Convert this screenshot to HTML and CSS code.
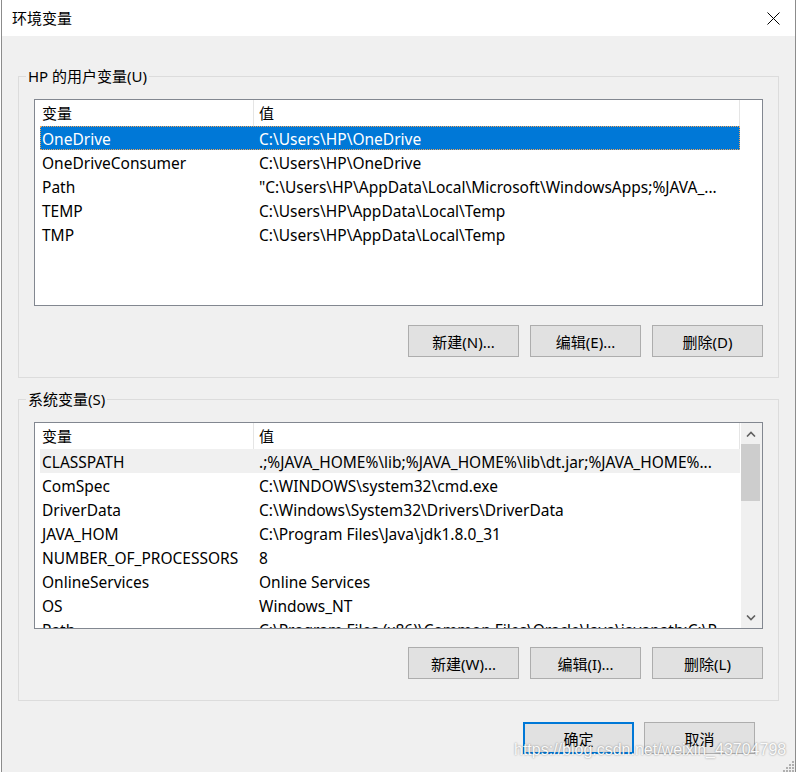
FILE: index.html
```html
<!DOCTYPE html>
<html lang="zh-CN">
<head>
<meta charset="utf-8">
<title>环境变量</title>
<link rel="stylesheet" href="styles.css">
</head>
<body>
<div class="window">
  <div class="titlebar">
    <span class="title">环境变量</span>
    <svg class="close" width="13" height="13" viewBox="0 0 13 13"><path d="M0.5 0.5 L12.5 12.5 M12.5 0.5 L0.5 12.5" stroke="#000" stroke-width="1" fill="none"/></svg>
  </div>
  <div class="content">
    <fieldset class="group group-user">
      <legend>HP 的用户变量(U)</legend>
      <div class="list">
        <div class="list-main">
          <div class="list-header"><div class="hcol hcol-name">变量</div><div class="hcol hcol-value">值</div></div>
          <div class="row selected"><div class="cell name">OneDrive</div><div class="cell value">C:\Users\HP\OneDrive</div></div>
          <div class="row"><div class="cell name">OneDriveConsumer</div><div class="cell value">C:\Users\HP\OneDrive</div></div>
          <div class="row"><div class="cell name">Path</div><div class="cell value">"C:\Users\HP\AppData\Local\Microsoft\WindowsApps;%JAVA_...</div></div>
          <div class="row"><div class="cell name">TEMP</div><div class="cell value">C:\Users\HP\AppData\Local\Temp</div></div>
          <div class="row"><div class="cell name">TMP</div><div class="cell value">C:\Users\HP\AppData\Local\Temp</div></div>
        </div>
      </div>
      <div class="buttons">
        <button class="btn">新建(N)...</button>
        <button class="btn">编辑(E)...</button>
        <button class="btn">删除(D)</button>
      </div>
    </fieldset>
    <fieldset class="group group-system">
      <legend>系统变量(S)</legend>
      <div class="list">
        <div class="list-main">
          <div class="list-header"><div class="hcol hcol-name">变量</div><div class="hcol hcol-value">值</div></div>
          <div class="row hover"><div class="cell name">CLASSPATH</div><div class="cell value">.;%JAVA_HOME%\lib;%JAVA_HOME%\lib\dt.jar;%JAVA_HOME%...</div></div>
          <div class="row"><div class="cell name">ComSpec</div><div class="cell value">C:\WINDOWS\system32\cmd.exe</div></div>
          <div class="row"><div class="cell name">DriverData</div><div class="cell value">C:\Windows\System32\Drivers\DriverData</div></div>
          <div class="row"><div class="cell name">JAVA_HOM</div><div class="cell value">C:\Program Files\Java\jdk1.8.0_31</div></div>
          <div class="row"><div class="cell name">NUMBER_OF_PROCESSORS</div><div class="cell value">8</div></div>
          <div class="row"><div class="cell name">OnlineServices</div><div class="cell value">Online Services</div></div>
          <div class="row"><div class="cell name">OS</div><div class="cell value">Windows_NT</div></div>
          <div class="row"><div class="cell name">Path</div><div class="cell value">C:\Program Files (x86)\Common Files\Oracle\Java\javapath;C:\P...</div></div>
        </div>
        <div class="scrollbar">
          <div class="sb-btn"><svg width="10" height="6" viewBox="0 0 10 6"><path d="M1 5.5 L5 1.5 L9 5.5" stroke="#606060" stroke-width="1.6" fill="none"/></svg></div>
          <div class="sb-thumb"></div>
          <div class="sb-track"></div>
          <div class="sb-btn"><svg width="10" height="6" viewBox="0 0 10 6"><path d="M1 0.5 L5 4.5 L9 0.5" stroke="#606060" stroke-width="1.6" fill="none"/></svg></div>
        </div>
      </div>
      <div class="buttons">
        <button class="btn">新建(W)...</button>
        <button class="btn">编辑(I)...</button>
        <button class="btn">删除(L)</button>
      </div>
    </fieldset>
    <div class="dialog-buttons">
      <button class="btn default">确定</button>
      <button class="btn">取消</button>
    </div>
  </div>
  <div class="watermark">https://blog.csdn.net/weixin_43704798</div>
  <svg class="grip" width="12" height="12" viewBox="0 0 12 12">
    <g fill="#b0b0b0">
      <rect x="9" y="1" width="2" height="2"/>
      <rect x="6" y="4" width="2" height="2"/><rect x="9" y="4" width="2" height="2"/>
      <rect x="3" y="7" width="2" height="2"/><rect x="6" y="7" width="2" height="2"/><rect x="9" y="7" width="2" height="2"/>
      <rect x="0" y="10" width="2" height="2"/><rect x="3" y="10" width="2" height="2"/><rect x="6" y="10" width="2" height="2"/><rect x="9" y="10" width="2" height="2"/>
    </g>
  </svg>
</div>
</body>
</html>
```

FILE: styles.css
```css
* { box-sizing: border-box; }

body {
  margin: 0;
  background: #ffffff;
  font-family: "Segoe UI", "Noto Sans", "Noto Sans CJK SC", sans-serif;
  font-size: 15px;
  color: #000;
}

.window {
  position: relative;
  margin-left: 1px;
  width: 795px;
  height: 772px;
  border-left: 1px solid #8c8c8c;
  border-right: 1px solid #8c8c8c;
  background: #f0f0f0;
  overflow: hidden;
}

.titlebar {
  height: 36px;
  background: #ffffff;
  display: flex;
  align-items: center;
  justify-content: space-between;
  padding: 0 15px 0 10px;
}

.title {
  font-family: "Noto Sans CJK SC", sans-serif;
  font-size: 15px;
  line-height: 20px;
}

.close { display: block; }

.content {
  padding: 30px 16px 0;
}

.group {
  margin: 0;
  width: 761px;
  min-width: 0;
  padding: 13px 15px 20px;
  border: 1px solid #dcdcdc;
}

.group-system {
  margin-top: 11px;
  padding-bottom: 21px;
}

.group legend {
  padding: 0 2px;
  margin-left: -8px;
  height: 20px;
  line-height: 20px;
  font-family: "Noto Sans", "Noto Sans CJK SC", sans-serif;
}

.list {
  display: flex;
  height: 207px;
  border: 1px solid #828790;
  background: #ffffff;
  overflow: hidden;
}

.list-main {
  flex: 1;
  overflow: hidden;
}

.list-header {
  display: flex;
  width: 705px;
  height: 26px;
}

.hcol {
  line-height: 26px;
  border-right: 1px solid #e5e5e5;
  white-space: nowrap;
}

.hcol-name { width: 219px; padding-left: 7px; }
.hcol-value { width: 486px; padding-left: 5px; }

.row {
  display: flex;
  width: 700px;
  height: 24px;
  line-height: 26px;
  margin-left: 5px;
  font-size: 15.5px;
}

.cell { white-space: nowrap; overflow: hidden; }
.cell.name { width: 213px; padding-left: 2px; }
.cell.value { width: 487px; padding-left: 6px; }

.row.selected {
  background: #0078d7;
  color: #ffffff;
  outline: 1px dotted #f3a55a;
  outline-offset: -1px;
}

.row.hover { background: #f0f0f0; }

.scrollbar {
  width: 21px;
  background: #f0f0f0;
  display: flex;
  flex-direction: column;
}

.sb-btn {
  height: 21px;
  display: flex;
  align-items: center;
  justify-content: center;
  padding-right: 2px;
}

.sb-thumb {
  height: 57px;
  background: #cdcdcd;
  margin-right: 2px;
}

.sb-track { flex: 1; }

.buttons {
  display: flex;
  justify-content: flex-end;
  gap: 11px;
  margin-top: 19px;
}

.group-system .buttons { margin-top: 18px; }

.btn {
  width: 111px;
  height: 32px;
  padding: 0;
  background: #e1e1e1;
  border: 1px solid #adadad;
  font-family: "Noto Sans", "Noto Sans CJK SC", sans-serif;
  font-size: 15px;
  color: #000;
}

.btn.default { border: 2px solid #0078d7; }

.dialog-buttons {
  display: flex;
  justify-content: flex-end;
  gap: 10px;
  margin-top: 21px;
  padding-right: 24px;
}

.watermark {
  position: absolute;
  left: 512px;
  top: 741px;
  font-family: "Liberation Sans", sans-serif;
  font-size: 16px;
  color: rgba(255, 255, 255, 0.95);
  text-shadow: 0 0 2px rgba(0, 0, 0, 0.45);
  white-space: nowrap;
}

.grip {
  position: absolute;
  right: 0;
  bottom: 0;
}
```
